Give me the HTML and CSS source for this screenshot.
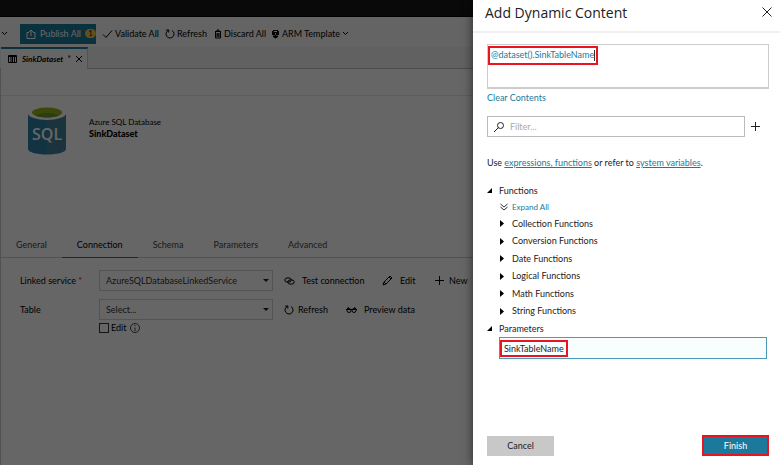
FILE: index.html
```html
<!DOCTYPE html>
<html lang="en">
<head>
<meta charset="utf-8">
<title>SinkDataset</title>
<link rel="stylesheet" href="styles.css">
</head>
<body>
<div class="app">
  <div class="topbar"></div>
  <div class="toolbar">
    <button class="tool tool-nav" aria-label="More"><svg width="7" height="7" viewBox="0 0 7 7"><path d="M1 2l2.500 2.500L6 2"/></svg></button>
    <button class="tool publish"><svg width="10" height="10" viewBox="0 0 10 10"><path d="M3 3.500H1v6h8v-6H7M5 7V1M3 3l2-2 2 2"/></svg><span>Publish All</span><span class="badge">1</span></button>
    <button class="tool validate"><svg width="11" height="10" viewBox="0 0 11 10"><path d="M1 5.500l3 3L10 1.500"/></svg><span>Validate All</span></button>
    <button class="tool refresh"><svg width="10" height="10" viewBox="0 0 10 10"><path d="M3.500 1.300a4 4 0 1 0 3.500.2M1.200 1h2.600v2.500"/></svg><span>Refresh</span></button>
    <button class="tool discard"><svg width="8" height="10" viewBox="0 0 8 10"><path d="M1 2.500h6M3 2.500V1h2v1.500M1.500 3v6h5V3M3 4v4M4 4v4M5 4v4"/></svg><span>Discard All</span></button>
    <button class="tool arm"><svg width="9" height="10" viewBox="0 0 9 10"><path class="solid" d="M2 1h5v1h1v4H7v2L4.500 9.500 2 8V6H1V2h1z"/><path class="light" d="M3 2.500h3M4.500 4v1.500M2.500 6.500h1M5.500 6.500h1"/></svg><span>ARM Template</span><svg width="7" height="7" viewBox="0 0 7 7"><path d="M1 2l2.500 2.500L6 2"/></svg></button>
  </div>
  <div class="filetabs">
    <div class="filetab"><svg width="9" height="8" viewBox="0 0 9 8"><path d="M.500.500h8v7h-8zM.500 1.500h8M3 2v5M4.500 2v5M6.500 2v5"/></svg><em>SinkDataset</em><span>*</span><button class="tab-close" aria-label="Close tab"><svg width="8" height="8" viewBox="0 0 8 8"><path d="M1 1l6 6M7 1L1 7"/></svg></button></div>
  </div>
  <main class="content">
    <div class="strip"></div>
    <header class="entity">
      <svg class="sql" width="38" height="48" viewBox="0 0 38 48">
        <path fill="#2d7fa6" d="M0 7v35c0 3 8 5.500 19 5.500V7z"/>
        <path fill="#427f96" d="M19 7v40.500c11 0 19-2.500 19-5.500V7z"/>
        <ellipse fill="#fff" cx="19" cy="6.500" rx="19" ry="6.500"/>
        <ellipse fill="#94b51a" cx="19" cy="5.500" rx="15" ry="5"/>
        <path fill="#679c30" d="M7 8.500c6-3.400 18-3.400 24 0-6 2.700-18 2.700-24 0z"/>
        <text x="4" y="33">SQL</text>
      </svg>
      <div class="names"><div>Azure SQL Database</div><strong>SinkDataset</strong></div>
    </header>
    <nav class="tabs">
      <a href="#general">General</a><a href="#connection" class="on">Connection</a><a href="#schema">Schema</a><a href="#parameters">Parameters</a><a href="#advanced">Advanced</a>
    </nav>
    <form class="form">
      <label for="service">Linked service <span class="star">*</span></label>
      <div class="select"><select id="service"><option>AzureSQLDatabaseLinkedService</option></select></div>
      <div class="actions">
        <button type="button" class="tool test"><svg width="11" height="10" viewBox="0 0 11 10"><ellipse cx="4" cy="4" rx="3.300" ry="2.200"/><ellipse cx="7" cy="6" rx="3.300" ry="2.200"/></svg><span>Test connection</span></button>
        <button type="button" class="tool edit"><svg width="11" height="11" viewBox="0 0 11 11"><path d="M1 10l1-3 6-6 2 2-6 6zM7 2l2 2M2 7l2 2"/></svg><span>Edit</span></button>
        <button type="button" class="tool new"><svg width="10" height="10" viewBox="0 0 10 10"><path d="M4.500 0v9M0 4.500h9"/></svg><span>New</span></button>
      </div>
      <label for="table">Table</label>
      <div class="select"><select id="table"><option>Select...</option></select></div>
      <div class="actions">
        <button type="button" class="tool reload"><svg width="10" height="10" viewBox="0 0 10 10"><path d="M3.500 1.300a4 4 0 1 0 3.500.2M1.200 1h2.600v2.500"/></svg><span>Refresh</span></button>
        <button type="button" class="tool preview"><svg width="11" height="8" viewBox="0 0 11 8"><circle cx="3" cy="4.500" r="2"/><circle cx="8" cy="4.500" r="2"/><path d="M0 3.500h11M1.500 3l1-2M9.500 3l-1-2"/></svg><span>Preview data</span></button>
      </div>
      <div class="manual"><input type="checkbox" id="manual"><label for="manual">Edit</label><svg width="10" height="10" viewBox="0 0 10 10"><circle cx="5" cy="5" r="4.500"/><path d="M5 4.500V8M5 2v1"/></svg></div>
    </form>
  </main>
</div>
<div class="scrim"></div>
<aside class="drawer">
  <header class="drawer-head"><h1>Add Dynamic Content</h1><button class="plain" aria-label="Close"><svg width="10" height="10" viewBox="0 0 10 10"><path d="M.5.5l9 9M9.500.5l-9 9"/></svg></button></header>
  <div class="drawer-body">
    <div class="expression"><textarea aria-label="Expression">@dataset().SinkTableName</textarea><span class="mark"></span></div>
    <a class="clear" href="#clear">Clear Contents</a>
    <div class="filter-row">
      <div class="filter"><svg width="12" height="12" viewBox="0 0 12 12"><circle cx="7.500" cy="4.500" r="3"/><path d="M5.500 6.500L1 11"/></svg><input type="text" aria-label="Filter" placeholder="Filter..."></div>
      <button class="plain" aria-label="Add"><svg width="10" height="10" viewBox="0 0 10 10"><path d="M5.500 0v9M1 4.500h9"/></svg></button>
    </div>
    <p class="hint">Use <a href="#expressions">expressions, functions</a> or refer to <a href="#variables">system variables</a>.</p>
    <button class="group"><svg width="5" height="5" viewBox="0 0 5 5"><path d="M5 0v5H0z"/></svg>Functions</button>
    <div class="tree">
      <button class="expand"><svg width="8" height="8" viewBox="0 0 8 8"><path d="M.5 1L4 4l3.500-3M.5 4L4 7l3.500-3"/></svg>Expand All</button>
      <button class="node"><svg width="4" height="7" viewBox="0 0 4 7"><path d="M0 0l4 3.500L0 7z"/></svg>Collection Functions</button>
      <button class="node"><svg width="4" height="7" viewBox="0 0 4 7"><path d="M0 0l4 3.500L0 7z"/></svg>Conversion Functions</button>
      <button class="node"><svg width="4" height="7" viewBox="0 0 4 7"><path d="M0 0l4 3.500L0 7z"/></svg>Date Functions</button>
      <button class="node"><svg width="4" height="7" viewBox="0 0 4 7"><path d="M0 0l4 3.500L0 7z"/></svg>Logical Functions</button>
      <button class="node"><svg width="4" height="7" viewBox="0 0 4 7"><path d="M0 0l4 3.500L0 7z"/></svg>Math Functions</button>
      <button class="node"><svg width="4" height="7" viewBox="0 0 4 7"><path d="M0 0l4 3.500L0 7z"/></svg>String Functions</button>
    </div>
    <button class="group"><svg width="5" height="5" viewBox="0 0 5 5"><path d="M5 0v5H0z"/></svg>Parameters</button>
    <button class="param"><span>SinkTableName</span></button>
  </div>
  <footer class="drawer-foot"><button class="cancel">Cancel</button><button class="finish">Finish</button></footer>
</aside>
</body>
</html>
```
FILE: styles.css
```css
* { box-sizing: border-box; }
body {
  margin: 0;
  min-height: 100vh;
  overflow: hidden;
  font: 9px/12px Lato, "Open Sans", sans-serif;
  color: #000;
  background: #fff;
}
button, input, select, textarea {
  font: inherit;
  color: inherit;
  margin: 0;
  padding: 0;
  border: 0;
  border-radius: 0;
  background: none;
}
svg { flex: none; fill: none; stroke: currentColor; stroke-width: 1; }

.app { min-height: 100vh; display: flex; flex-direction: column; white-space: nowrap; }
.topbar { height: 17px; background: #171717; border-bottom: 1px solid #000; }
.toolbar { height: 30px; padding-top: 3px; display: flex; align-items: center; background: #fafafa; }
.tool { display: flex; align-items: center; gap: 4px; }
.tool-nav { width: 20px; padding-left: 1px; }
.publish { width: 76px; height: 20px; padding-left: 6px; color: #fff; background: #1b7a9c; }
.publish span:first-of-type { flex: 1; text-align: left; }
.badge { flex: none; width: 11px; height: 9px; margin-right: 5px; border-radius: 5px; font-size: 7px; line-height: 9px; text-align: center; color: #000; background: #f0c850; }
.validate { width: 63px; margin-left: 6px; gap: 2px; }
.refresh { width: 49px; gap: 2px; }
.discard { width: 56px; gap: 2px; }
.arm { margin-left: 1px; gap: 2px; }
.solid { fill: #000; stroke: none; }
.light { stroke: #fff; }

.filetabs { height: 22px; padding-left: 1px; background: #f3f3f3; border-bottom: 1px solid #bbb; display: flex; }
.filetab { width: 87px; height: 22px; padding-left: 7px; display: flex; align-items: center; gap: 4px; background: #fff; border-top: 2px solid #1b7a9c; border-right: 1px solid #ccc; }
.filetab em { font-size: 8px; font-weight: 700; margin-left: 1px; }
.tab-close { display: flex; }

.content { flex: 1; border-left: 1px solid #ccc; }
.strip { height: 27px; border-bottom: 1px solid #e8e8e8; }
.entity { height: 138px; padding: 11px 0 0 27px; display: flex; gap: 23px; }
.entity svg { stroke: none; }
.sql text { fill: #fff; font: 600 16px "Open Sans", sans-serif; }
.names { padding-top: 9px; font-size: 8px; }
.names strong { display: block; font-size: 9px; font-weight: 900; }

.tabs { height: 24px; display: flex; border-bottom: 1px solid #ccc; }
.tabs a { height: 24px; padding: 5px 15px 0; color: #444; text-decoration: none; }
.tabs .on { color: #000; border-bottom: 1px solid #1b7a9c; }

.form { padding: 12px 0 0 19px; display: grid; grid-template-columns: 79px 174px 1fr; grid-template-rows: 21px 21px 12px; row-gap: 8px; align-items: center; }
.star { color: #e02020; }
.select { position: relative; height: 21px; border: 1px solid #d0d0d0; }
.select select { width: 100%; height: 100%; padding-left: 6px; appearance: none; color: #333; }
.select::after { content: ""; position: absolute; right: 3px; top: 8px; border: 3px solid transparent; border-top-color: #222; }
.actions { display: flex; padding-left: 11px; }
.actions .tool { gap: 7px; }
.test { width: 98px; }
.edit { width: 53px; }
.reload { width: 62px; }
.actions .reload, .actions .new { gap: 4px; }
.manual { grid-column: 2; margin-top: -12px; display: flex; align-items: center; gap: 2px; }
.manual input { appearance: none; width: 10px; height: 10px; border: 1px solid #333; }
.manual svg { margin-left: 2px; stroke: #444; }

.scrim { position: absolute; inset: 0; background: rgba(0, 0, 0, .6); }

.drawer { position: absolute; top: 0; right: 0; bottom: 0; width: 307px; display: flex; flex-direction: column; color: #222; background: #fff; box-shadow: 0 0 10px rgba(0, 0, 0, .6); white-space: nowrap; }
.drawer-head { height: 33px; padding: 0 8px 8px 12px; display: flex; align-items: center; justify-content: space-between; border-bottom: 2px solid #f0f0f0; }
.drawer-head h1 { margin: 0; padding-top: 2px; font: 400 14px/20px "Open Sans", sans-serif; }
.plain { display: flex; }
.drawer-body { flex: 1; padding: 11px 11px 0 14px; }
.expression { position: relative; height: 45px; border: 1px solid #ccc; border-bottom-width: 2px; }
.expression textarea { display: block; width: 100%; height: 100%; padding: 4px 3px; resize: none; outline: 0; color: #1b7a9c; }
.mark { position: absolute; left: 0; top: 1px; width: 110px; height: 19px; border: 2px solid #e81520; }
.mark::after { content: ""; position: absolute; right: 1px; top: 2px; width: 1px; height: 11px; background: #333; }
a { color: #1b7a9c; }
.clear { display: block; margin-top: 3px; text-decoration: none; }
.filter-row { margin-top: 12px; display: flex; align-items: center; gap: 5px; }
.filter { width: 258px; height: 21px; padding-left: 5px; display: flex; align-items: center; gap: 5px; border: 1px solid #bbb; }
.filter input { flex: 1; min-width: 0; outline: 0; }
.filter input::placeholder { color: #aaa; }
.hint { margin: 20px 0 0; }
.group { display: flex; align-items: center; gap: 7px; height: 17px; }
.group svg, .node svg { fill: #000; stroke: none; }
.hint + .group { margin-top: 13px; }
.tree { height: 121px; padding-left: 13px; display: grid; grid-template-rows: 16px repeat(6, 1fr); }
.expand, .node { display: flex; align-items: center; }
.expand { gap: 4px; font-size: 8px; color: #1b7a9c; }
.expand svg { stroke: #333; }
.node { gap: 8px; }
.param { display: flex; width: 268px; height: 22px; margin-left: 12px; padding-top: 2px; border: 1px solid #4a9ab8; background: #f8fdfe; }
.param span { height: 17px; padding: 1px 2px; border: 2px solid #e81520; }
.drawer-foot { padding: 0 11px 9px 14px; display: flex; justify-content: space-between; align-items: center; }
.cancel { width: 67px; height: 20px; background: #c8c8c8; }
.finish { width: 67px; height: 21px; color: #fff; background: #1b7a9c; border: 2px solid #e81520; }
```
